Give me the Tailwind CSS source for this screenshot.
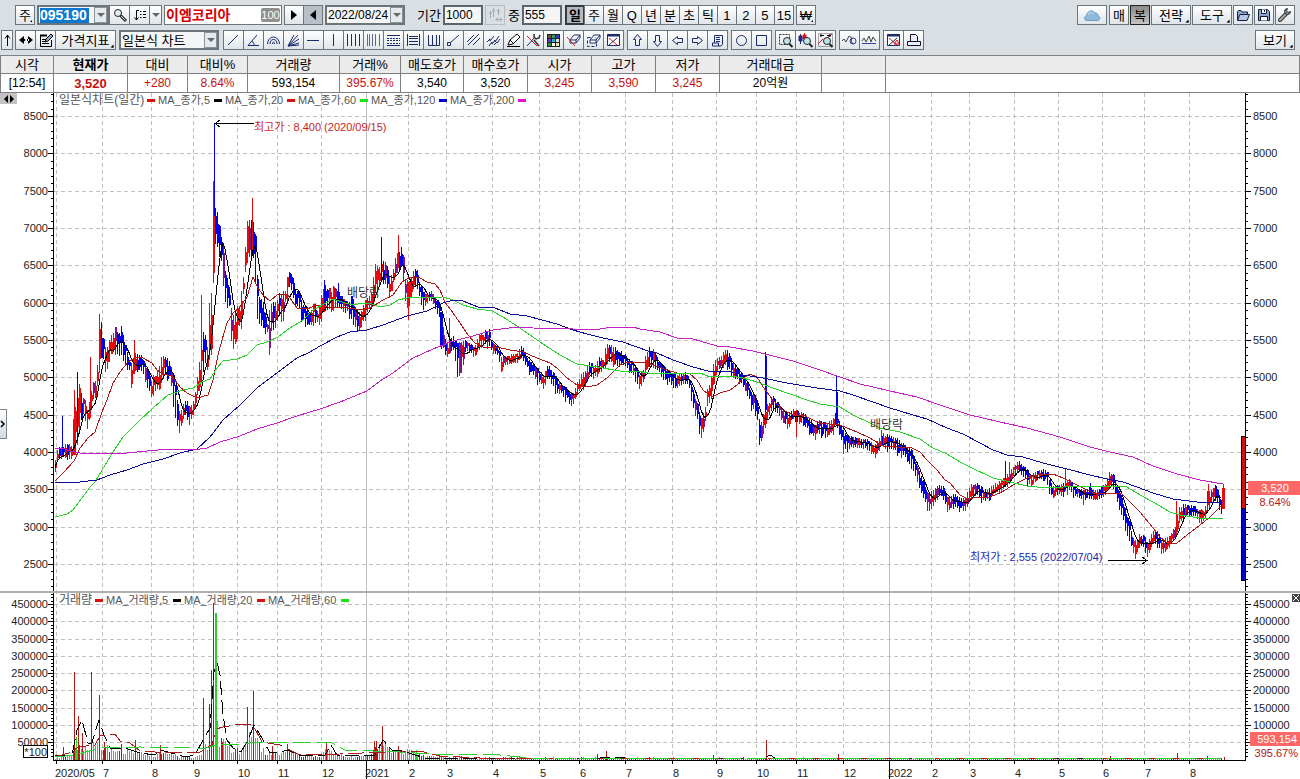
<!DOCTYPE html>
<html lang="ko">
<head>
  <meta charset="UTF-8" />
  <meta name="viewport" content="width=device-width, initial-scale=1.0" />
  <title>이엠코리아 차트</title>
  <script src="https://cdn.jsdelivr.net/npm/@tailwindcss/browser@4"></script>
</head>
<body class="bg-white text-black text-[13px] leading-none font-['Liberation_Sans','Noto_Sans_CJK_KR',sans-serif]">

  <header class="bg-[#d9dfe3] pt-[5px] pb-[5px] pr-[5px] overflow-hidden">
    <!-- 종목 / 주기 -->
    <div class="flex items-center h-5 pl-[15px] whitespace-nowrap">
      <button class="relative w-5 h-5 border border-[#6d757c] bg-linear-to-b from-white to-[#dfe5ea]">주<i class="absolute right-px bottom-px border-2 border-transparent border-r-black border-b-black scale-50"></i></button>
      <label class="flex items-center h-5 w-[72px] ml-[2px] border-2 border-[#6d757c] bg-[#f3f5f7]">
        <input aria-label="종목코드" value="095190" class="w-[49px] h-[15px] ml-px bg-[#0b78d0] text-white text-sm font-bold outline-none" />
        <span class="flex items-center justify-center w-[13px] h-4 ml-auto border border-[#8b9298] bg-[#e6eaee]"><svg width="8" height="4" fill="#666"><path d="M0 0h8L4 4z"/></svg></span>
      </label>
      <button aria-label="종목검색" class="w-[21px] h-5 border border-[#6d757c] bg-linear-to-b from-white to-[#dfe5ea]"><svg class="mx-auto" width="16" height="16" fill="none" stroke="#222"><circle cx="6" cy="6" r="3.5" fill="#dff0f5"/><path d="M8.500 8.500l5.500 5.500" stroke-width="3"/><path d="M9 9l4.500 4.500" stroke="#ddd"/></svg></button>
      <button aria-label="정렬" class="w-[21px] h-5 -ml-px border border-[#6d757c] bg-linear-to-b from-white to-[#dfe5ea]"><svg class="mx-auto" width="16" height="16" fill="none" stroke="#000"><path d="M7 3.500H4.500V13M2.500 10.500l2 2.500 2-2.500M8 4.500h1.500M11 4.500h3M8 7.500h1.500M11 7.500h3M8 10.500h1.500M11 10.500h3"/></svg></button>
      <button aria-label="정렬 더보기" class="w-[13px] h-5 -ml-px border border-[#6d757c] bg-linear-to-b from-white to-[#dfe5ea]"><svg class="mx-auto" width="8" height="4" fill="#666"><path d="M0 0h8L4 4z"/></svg></button>
      <label class="flex items-center h-5 w-[118px] ml-[2px] border border-[#6d757c] bg-white pr-px">
        <input aria-label="종목명" value="이엠코리아" class="min-w-0 flex-1 h-4 pl-px text-[#d80000] text-sm font-bold outline-none" />
        <span class="bg-[#8f8f8f] text-white text-[11px] leading-[14px] rounded-xs w-[19px] text-center">100</span>
      </label>
      <button aria-label="다음" class="w-5 h-5 ml-[2px] border border-[#6d757c] bg-linear-to-b from-white to-[#dfe5ea]"><svg class="mx-auto" width="8" height="10"><path d="M1 0l6 5-6 5z"/></svg></button>
      <button aria-label="이전" class="w-5 h-5 -ml-px border border-[#6d757c] bg-[#b9bfc6]"><svg class="mx-auto" width="8" height="10"><path d="M7 0L1 5l6 5z"/></svg></button>
      <label class="flex items-center h-5 w-[80px] ml-[2px] border-2 border-[#6d757c] bg-[#f3f5f7]">
        <input aria-label="기준일" value="2022/08/24" class="w-[62px] h-4 pl-px text-xs outline-none" />
        <span class="flex items-center justify-center w-[13px] h-4 ml-auto border border-[#8b9298] bg-[#e6eaee]"><svg width="8" height="4" fill="#666"><path d="M0 0h8L4 4z"/></svg></span>
      </label>
      <label for="period" class="ml-3">기간</label>
      <input id="period" value="1000" class="w-10 h-5 ml-[2px] pl-px border-2 border-[#5d656c] bg-[#f3f5f7] text-xs outline-none" />
      <button aria-label="봉 간격" class="w-5 h-5 ml-[2px] border border-[#b6bcc2]"><svg class="mx-auto" width="16" height="16" fill="none" stroke="#a3a9af"><path d="M3.500 4v7M6.500 1v9M11.500 2v6M2 6h3M5 4h3M10 4h3M9 12.500h6M11 10.500l-2 2 2 2M13 10.500l2 2-2 2"/></svg></button>
      <label for="count" class="ml-[3px]">중</label>
      <input id="count" value="555" class="w-10 h-5 ml-[2px] pl-px border-2 border-[#5d656c] bg-[#f3f5f7] text-xs outline-none" />
      <div id="units" class="flex ml-[3px]"></div>
      <button class="w-5 h-5 ml-[2px] border border-[#6d757c] bg-linear-to-b from-white to-[#dfe5ea] relative">₩<i class="absolute right-px bottom-px border-2 border-transparent border-r-black border-b-black scale-50"></i></button>

      <div class="flex gap-px ml-auto">
        <button aria-label="클라우드" class="w-[30px] h-5 mr-px border border-[#6d757c] bg-linear-to-b from-white to-[#dfe5ea]"><svg class="mx-auto" width="18" height="14"><path d="M4 12.500C1 12.500 .5 8.500 3.500 8 3.500 3.500 9 1 12 5c3 0 3 2 3 3 3 1 2 4.500-.5 4.500z" fill="#8db9dc" stroke="#6c9cc0"/><path d="M5 7c1-3 4-3 6-1" fill="none" stroke="#d6e9f6"/></svg></button>
        <button class="w-5 h-5 border border-[#6d757c] bg-linear-to-b from-white to-[#dfe5ea]">매</button>
        <button class="w-5 h-5 border border-[#222] bg-linear-to-b from-[#8a8a8a] to-[#c4c4c4]">복</button>
        <button class="w-10 h-5 border border-[#6d757c] bg-linear-to-b from-white to-[#dfe5ea] relative">전략<i class="absolute right-px bottom-px border-2 border-transparent border-r-black border-b-black scale-75"></i></button>
        <button class="w-10 h-5 border border-[#6d757c] bg-linear-to-b from-white to-[#dfe5ea] relative">도구<i class="absolute right-px bottom-px border-2 border-transparent border-r-black border-b-black scale-75"></i></button>
        <button aria-label="열기" class="w-5 h-5 border border-[#6d757c] bg-linear-to-b from-white to-[#dfe5ea]"><svg class="mx-auto" width="16" height="16" fill="#8fa6cf" stroke="#111c3d"><path d="M2.500 13V4.500l1-1H6l1 1.500h5.500V7"/><path d="M2.500 13.500l2.500-6h9.500l-2.500 6z" fill="#b7c7e3"/></svg></button>
        <button aria-label="저장" class="w-5 h-5 border border-[#6d757c] bg-linear-to-b from-white to-[#dfe5ea]"><svg class="mx-auto" width="16" height="16" fill="#8fa6cf" stroke="#111c3d"><path d="M2.500 2.500h9l2 2v9h-11z"/><path d="M5.500 2.500v4h5v-4M4.500 13.500V9.500h7v4" fill="#fff"/><path d="M8.500 3v2"/></svg></button>
        <button aria-label="설정" class="w-5 h-5 border border-[#6d757c] bg-linear-to-b from-white to-[#dfe5ea]"><svg class="mx-auto" width="16" height="16"><path d="M3 13l6-6" stroke="#333" stroke-width="4" stroke-linecap="round"/><path d="M3 13l6-6" stroke="#aaa" stroke-width="2" stroke-linecap="round"/><path d="M13.500 4.500a3 3 0 1 1-3-3L9.500 4l1.500 1.500z" fill="#888" stroke="#333"/></svg></button>
      </div>
    </div>

    <!-- 도형 도구 -->
    <div class="flex items-center h-5 mt-[5px] pl-px whitespace-nowrap">
      <button aria-label="위로" class="w-3 h-5 border border-[#6d757c] bg-linear-to-b from-white to-[#dfe5ea]"><svg width="10" height="14" fill="none" stroke="#000"><path d="M5.500 13V2M3 5.500L5.500 2 8 5.500"/></svg></button>
      <button aria-label="좌우 이동" class="w-[21px] h-5 ml-[2px] border border-[#6d757c] bg-linear-to-b from-white to-[#dfe5ea]"><svg class="mx-auto" width="14" height="8"><path d="M5 0v8L0 4zM9 0v8l5-4zM4 3h2v2H4zM8 3h2v2H8z"/></svg></button>
      <button aria-label="메모" class="w-[21px] h-5 -ml-px border border-[#6d757c] bg-linear-to-b from-white to-[#dfe5ea]"><svg class="mx-auto" width="16" height="16" fill="none" stroke="#000"><path d="M13.500 8v6.500h-11v-11H9"/><path d="M2 3.500h7" stroke-width="2"/><path d="M4 7.500h4M4 9.500h3M4 11.500h7"/><path d="M7 10l1-3 5-5 2 2-5 5z" fill="#8fa6cf"/></svg></button>
      <button class="w-[61px] h-5 -ml-px border border-[#6d757c] bg-linear-to-b from-white to-[#dfe5ea] relative">가격지표<i class="absolute right-px bottom-px border-2 border-transparent border-r-black border-b-black scale-75"></i></button>
      <div class="relative ml-[3px]">
        <select aria-label="차트 종류" class="block w-[100px] h-5 pl-px border-2 border-[#6d757c] bg-[#f3f5f7] appearance-none outline-none"><option>일본식 차트</option></select>
        <span class="absolute right-[2px] top-[2px] flex items-center justify-center w-[13px] h-4 border border-[#8b9298] bg-[#e6eaee] pointer-events-none"><svg width="8" height="4" fill="#666"><path d="M0 0h8L4 4z"/></svg></span>
      </div>
      <div id="tools" class="flex gap-[3px] ml-1"></div>
      <button class="w-10 h-5 ml-auto border border-[#6d757c] bg-linear-to-b from-white to-[#dfe5ea] relative">보기<i class="absolute right-px bottom-px border-2 border-transparent border-r-black border-b-black scale-75"></i></button>
    </div>
  </header>

  <!-- 시세 -->
  <table class="w-full table-fixed border-collapse text-center text-xs whitespace-nowrap">
    <colgroup>
      <col class="w-[53px]" /><col class="w-[74px]" /><col class="w-[60px]" /><col class="w-[60px]" /><col class="w-[92px]" /><col class="w-[61px]" /><col class="w-[63px]" /><col class="w-[64px]" /><col class="w-[64px]" /><col class="w-[64px]" /><col class="w-[64px]" /><col class="w-[102px]" /><col class="w-[64px]" /><col />
    </colgroup>
    <thead>
      <tr class="h-[18px] bg-[#ebebeb] text-[13px] [&>th]:font-normal [&>th]:p-0 [&>th]:border [&>th]:border-[#808080]">
        <th>시각</th><th><b>현재가</b></th><th>대비</th><th>대비%</th><th>거래량</th><th>거래%</th><th>매도호가</th><th>매수호가</th><th>시가</th><th>고가</th><th>저가</th><th>거래대금</th><th></th><th></th>
      </tr>
    </thead>
    <tbody>
      <tr class="h-[19px] [&>td]:p-0 [&>td]:border [&>td]:border-[#808080]">
        <td>[12:54]</td><td class="font-bold text-[13px] text-[#c80f0f]">3,520</td><td class="text-[#c80f0f]">+280</td><td class="text-[#c80f0f]">8.64%</td><td>593,154</td><td class="text-[#c80f0f]">395.67%</td><td>3,540</td><td>3,520</td><td class="text-[#c80f0f]">3,245</td><td class="text-[#c80f0f]">3,590</td><td class="text-[#c80f0f]">3,245</td><td>20억원</td><td></td><td></td>
      </tr>
    </tbody>
  </table>

  <main class="relative">
    <svg id="chart" class="block w-full h-auto" viewBox="0 93 1300 686" role="img" aria-label="일본식차트(일간)"></svg>
    <button aria-label="차트 이동" class="absolute left-0 top-0 w-[17px] h-[11px] bg-[#c3c3c3]"><svg class="mx-auto" width="12" height="8"><path d="M5 0v8L1 4zM7 0v8l4-4z"/></svg></button>
    <button aria-label="패널 열기" class="absolute left-0 top-[46%] w-[7px] h-[30px] border border-l-0 border-[#7d858c] bg-linear-to-b from-white to-[#d3d9df]"><svg width="6" height="8" fill="none" stroke="#000" stroke-width="1.500"><path d="M1 1l3 3-3 3"/></svg></button>
    <button aria-label="거래량 닫기" class="absolute right-0 top-[73%] w-2 h-2 bg-[#444]"><svg width="8" height="8" stroke="#fff"><path d="M1 1l6 6M7 1L1 7"/></svg></button>
  </main>

  <script>
    // 주기 버튼
    const units = document.getElementById("units");
    ["일", "주", "월", "Q", "년", "분", "초", "틱", "1", "2", "5", "15"].forEach((u, i) => {
      const b = document.createElement("button");
      b.className = i === 0
        ? "w-5 h-5 border-2 border-[#333a40] bg-[#b4b9c0] font-bold"
        : "w-5 h-5 -ml-px border border-[#6d757c] bg-linear-to-b from-white to-[#dfe5ea]";
      b.textContent = u;
      units.appendChild(b);
    });

    // 도형 버튼 (16x16)
    const lens = `<circle cx="10" cy="9" r="3.5" fill="#bfe3ea" stroke="#222"/><path d="M12.500 12l3 3" stroke="#222" stroke-width="2"/>`;
    const win = `<path d="M2.500 2.500h12v11h-12z" fill="#fff"/><path d="M2 3.500h13" stroke-width="2"/>`;
    const eraser = `<path d="M5 8l4-5h6l-4 5zM5 8v3h6l4-5V3M11 8v3" fill="#fff"/>`;
    const groups = [
      [
        ["추세선", `<path d="M3 13L13 3"/>`],
        ["각도선", `<path d="M14 13.500H3L12 3M7 9.500c2 1 2 2 2 4"/>`],
        ["원호", `<path d="M2.500 12a6 7 0 0 1 12 0M5 12a3.500 4.500 0 0 1 7 0M7.500 12a1 2 0 0 1 2 0"/>`],
        ["부채꼴", `<path d="M3 14L14 11M3 14L14 7M3 14L13 3M3 14L9 3M3 14L14 13"/>`],
        ["수평선", `<path d="M2 8.500h12"/>`],
        ["수직선", `<path d="M8.500 2v12"/>`],
        ["등간격선", `<path d="M2.500 2v12M6.500 2v12M10.500 2v12M14.500 2v12"/>`],
        ["피보나치 시간대", `<path d="M2.500 2v12M4.500 2v12M7.500 2v12M10.500 2v12M14.500 2v12" stroke="#5b6b96"/>`],
        ["되돌림", `<path d="M2 3.500h13M2 13.500h13"/><path d="M2 6.500h13M2 8.500h13M2 11.500h13" stroke-dasharray="2 1"/>`],
        ["가격대", `<path d="M2.500 2v12M14.500 2v12M4 4.500h9M4 6.500h9M4 9.500h9M4 12.500h9"/>`],
        ["사이클", `<path d="M3.500 3v10.500H7.500V3M7.500 10.500v3h4V3M11.500 13.500h3V3"/>`],
        ["선분", `<path d="M5 11l9-8M2.500 10.500h3v3h-3z"/>`],
        ["평행선", `<path d="M2 10l7-7M3 13L14 2M8 13l7-7"/>`],
        ["채널", `<path d="M2 10l3-3v2l4-5M4 14l3-4v2l3-4v2l4-6M9 13l3-3v1l3-4"/>`],
        ["연필", `<path d="M3 13l2-5 7-6 3 3-7 7zM5 8l3 3" stroke="#000" fill="#fff"/><path d="M2 14.500h13" stroke="#000"/>`],
        ["지표 설정", `<path d="M2 4l10 10" stroke="#d11"/><path d="M2 14L10 5"/><path d="M9 8l5 6M9 2v3l2 2 3-1 1-3" stroke="#333" stroke-width="1.500"/>`],
        ["색상", `<g stroke="none"><path d="M2 2h13v13H2z" fill="#222"/><path d="M3 3h3v3H3z" fill="#714c3a"/><path d="M7 3h3v3H7z" fill="#2d9b62"/><path d="M11 3h3v3h-3z" fill="#3340b5"/><path d="M3 7h3v3H3z" fill="#5a3fc1"/><path d="M7 7h3v3H7z" fill="#28b7c5"/><path d="M11 7h3v3h-3z" fill="#dddddd"/><path d="M3 11h3v3H3z" fill="#3c8f40"/><path d="M7 11h3v3H7z" fill="#fff"/><path d="M11 11h3v3h-3z" fill="#ebe6ac"/></g>`],
        ["지우기", `${eraser}<path d="M2 5l8 9" stroke="#d11"/>`],
        ["선택 지우기", `<path d="M2.500 5.500h9v9h-9z" stroke-dasharray="3 2"/>${eraser}`],
        ["전체 지우기", `${win}<path d="M4 6l8 7" stroke="#d11"/><path d="M4 13l8-7"/>`]
      ],
      [
        ["위 화살표", `<path d="M8.500 2.500l4 5h-2v6h-4v-6h-2z"/>`],
        ["아래 화살표", `<path d="M8.500 14.500l4-5h-2v-6h-4v6h-2z"/>`],
        ["왼쪽 화살표", `<path d="M3.500 8.500l5-4v2h5v4h-5v2z"/>`],
        ["오른쪽 화살표", `<path d="M13.500 8.500l-5-4v2h-5v4h5v2z"/>`],
        ["문자", `<path d="M5.500 11V3.500h8v9l-1.500 1.500H3.500v-3h6v3M7 5.500h4M7 7.500h4M7 9.500h4"/>`]
      ],
      [
        ["원", `<circle cx="8.500" cy="8.500" r="5"/>`],
        ["사각형", `<path d="M3.500 3.500h10v10h-10z"/>`]
      ],
      [
        ["영역 확대", `<path d="M2.500 2.500h10v10h-10z" stroke="#333" stroke-dasharray="2 1"/>${lens}`],
        ["봉 확대", `<path d="M3.500 2v10" /><path d="M2 4h3v5H2z" fill="#22b"/><path d="M7.500 1v8M6 3h3v4H6z" stroke="#d11" fill="#d11"/>${lens}`],
        ["전체 보기", `<path d="M1.500 1.500h14v13h-14z" stroke="#555" stroke-dasharray="1 1"/><path d="M1 12l5-5M10 6l5-4" stroke="#d11"/><path d="M3 3.500h4M10 3.500h4M4 2v3M13 2v3" stroke="#000"/>${lens}`]
      ],
      [
        ["파형 검색", `<path d="M1 9l2-2 2 3 3-6 3 2-1 4 3 2" stroke="#444"/><circle cx="12" cy="9" r="3" stroke="#3b3ba0"/>`],
        ["파형", `<path d="M1 9l2-3 2 4 3-6 2 6 2-5 3 4" stroke="#444"/><path d="M1 11.500h14" stroke="#3b3ba0"/>`]
      ],
      [
        ["차트 창", `${win}<path d="M4 6l8 7M9 12l3-4 2 4z" stroke="#d11"/><path d="M4 13l8-7"/>`],
        ["인쇄", `<path d="M5.500 9V2.500h5l2 2V9M2.500 9.500h13v4h-13z" fill="#eef" stroke="#112"/>`]
      ]
    ];
    const tools = document.getElementById("tools");
    groups.forEach((g) => {
      const box = document.createElement("div");
      box.className = "flex";
      g.forEach(([name, d], i) => {
        const b = document.createElement("button");
        b.setAttribute("aria-label", name);
        b.className = i === 0
          ? "w-[21px] h-5 border border-[#6d757c] bg-linear-to-b from-white to-[#dfe5ea]"
          : "w-[21px] h-5 -ml-px border border-[#6d757c] bg-linear-to-b from-white to-[#dfe5ea]";
        b.innerHTML = `<svg class="mx-auto" width="17" height="17" fill="none" stroke="#1b2a6b">${d}</svg>`;
        box.appendChild(b);
      });
      tools.appendChild(box);
    });

    // ---------- 차트 ----------
    const L = 53, R = 1245, BASE = 760;
    const RED = "#e60a0a", BLUE = "#0000e6", DRED = "#b01818", GREEN = "#28d228";
    const out = [];
    const line = (x1, y1, x2, y2, c, extra = "") => out.push(`<path d="M${x1} ${y1}L${x2} ${y2}" stroke="${c}" ${extra}/>`);
    const rect = (x, y, w, h, c) => out.push(`<rect x="${x}" y="${y}" width="${w}" height="${h}" fill="${c}"/>`);
    const text = (x, y, s, c = "#222", size = 11, anchor = "start") =>
      out.push(`<text x="${x}" y="${y}" fill="${c}" font-size="${size}" text-anchor="${anchor}">${s}</text>`);
    const nums = (s) => s.trim().split(/\s+/).map((p) => p.split(",").map(Number));
    const priceY = (p) => Math.round(116 + (8500 - p) * 448 / 6000) + 0.5;
    const volY = (v) => Math.round(604 + (450000 - v) * 138 / 400000) + 0.5;

    let seed = 7;
    const rnd = () => (seed = (seed * 16807) % 2147483647) / 2147483647;

    function at(pts, x) {
      let i = 1;
      while (i < pts.length - 1 && pts[i][0] < x) i++;
      const a = pts[i - 1], b = pts[i];
      const t = Math.min(1, Math.max(0, (x - a[0]) / (b[0] - a[0])));
      return a.slice(1).map((v, k) => v + (b[k + 1] - v) * t);
    }

    // 격자
    const months = [[56, "2020/05"], [102, "7"], [151, "8"], [193, "9"], [237, "10"], [277, "11"], [321, "12"], [366, "2021"], [408, "2"], [446, "3"], [492, "4"], [539, "5"], [579, "6"], [625, "7"], [672, "8"], [716, "9"], [756, "10"], [796, "11"], [843, "12"], [889, "2022"], [931, "2"], [969, "3"], [1014, "4"], [1058, "5"], [1102, "6"], [1144, "7"], [1189, "8"]];
    const dash = `stroke-dasharray="4 3"`;
    for (let p = 2500; p <= 8500; p += 500) line(L + 1, priceY(p), R, priceY(p), "#c0c0c0", dash);
    for (let v = 50000; v <= 450000; v += 50000) line(L + 1, volY(v), R, volY(v), "#c0c0c0", dash);
    months.forEach(([x, m]) => {
      const year = m.length === 4;
      line(x + 0.5, 93, x + 0.5, BASE, "#c0c0c0", year ? "" : dash);
      line(x + 0.5, BASE, x + 0.5, year ? 779 : 764, "#000");
      text(m.length > 2 ? x - 1 : x + 1, 777, m);
    });

    // 봉: x, 고가, 저가
    const env = nums(`
      55,462,473 57,450,462 60,447,457 66,445,458 72,447,458 74,390,455 76,415,455 78,372,440 80,398,430 82,390,413 84,400,420 87,407,428
      90,395,418 93,380,400 96,383,397 99,314,373 102,331,355 105,345,377 108,345,367 111,335,350 115,329,350 118,328,355 121,326,360
      125,345,365 129,360,371 131,362,390 134,355,369 137,352,370 142,357,373 145,360,380 148,374,390 151,378,398 156,375,390 160,358,391
      164,358,375 170,362,376 173,372,410 177,395,427 180,415,432 183,405,418 186,397,416 189,405,427 192,405,418 195,392,408 199,360,390
      202,335,380 204,323,360 207,345,372 209,303,368 211,277,350 213,215,283 216,197,240 218,217,257 220,228,257 223,243,287 226,277,308
      229,285,310 232,318,357 235,308,345 238,307,328 241,292,330 244,263,283 247,215,262 250,217,253 252,220,253 255,232,293 258,290,330
      261,298,328 264,303,338 267,325,331 269,310,350 272,297,330 276,303,325 279,293,318 282,293,330 285,293,302 287,277,303 289,272,290
      292,274,293 295,288,303 298,290,306 302,303,320 306,308,322 310,313,327 314,303,322 318,313,323 321,296,320 324,285,310 328,290,312
      333,288,310 338,288,308 342,300,310 347,302,312 352,295,325 356,307,325 360,312,332 364,303,320 368,297,310 372,290,308 374,262,297
      378,265,290 381,262,282 384,260,282 386,260,287 389,277,298 393,268,282 396,253,275 399,250,268 402,247,270 405,278,300 408,280,312
      411,278,298 415,267,285 417,268,290 420,285,303 424,295,305 430,292,300 435,297,307 439,305,316 441,310,348 444,333,350 446,347,362
      449,335,352 453,338,352 458,343,377 461,342,373 465,342,352 470,345,351 474,348,358 478,335,350 482,335,347 486,330,343 489,331,347
      492,343,352 497,347,354 501,358,367 506,357,364 512,355,362 517,354,361 521,346,358 524,350,361 527,358,367 532,363,374 536,368,379
      540,372,381 543,376,388 547,365,380 551,370,380 555,376,392 559,383,392 564,387,396 570,392,400 573,394,402 577,384,396 580,376,388
      585,370,385 589,361,376 594,368,378 598,358,372 603,360,370 606,344,363 611,343,362 615,347,362 619,352,362 625,356,364 630,360,370
      635,366,378 639,375,390 643,370,383 645,355,376 649,348,366 653,350,370 657,357,369 662,365,378 668,371,380 672,374,386 677,376,388
      681,373,384 686,374,381 690,380,391 694,396,414 698,405,423 701,418,442 704,413,427 707,390,407 710,378,407 713,364,387 716,358,371
      720,358,367 724,352,363 729,350,370 732,361,378 736,366,379 740,370,381 744,378,391 748,386,398 753,393,409 757,400,420 759,417,440
      762,423,443 764,405,425 769,402,414 773,397,409 778,404,413 783,411,422 787,414,424 792,411,419 797,412,421 803,414,425 808,419,429
      814,425,439 818,421,432 823,422,433 828,424,438 833,420,429 835,412,424 840,424,436 844,431,450 849,436,446 856,438,446 862,440,447
      868,441,449 873,446,454 878,441,451 881,433,447 886,434,451 890,437,447 895,438,449 900,443,453 906,447,458 911,450,467 915,460,478
      920,474,490 926,488,506 928,498,512 933,489,505 937,486,496 940,485,494 943,487,499 947,496,510 952,496,506 957,496,506 963,500,510
      967,493,508 970,483,500 976,484,493 981,488,500 986,491,499 991,486,496 997,484,491 1002,480,490 1005,476,487 1010,470,483
      1014,466,473 1018,462,472 1022,467,476 1027,470,480 1031,475,487 1036,471,479 1042,471,478 1046,470,478 1049,478,494 1053,487,497
      1058,485,493 1064,484,491 1068,478,489 1073,486,493 1079,490,497 1084,492,500 1090,488,497 1094,491,499 1099,489,498 1105,485,493
      1109,474,490 1112,473,484 1116,484,498 1120,494,511 1124,506,523 1127,515,540 1131,530,544 1134,543,557 1138,537,548 1143,534,545
      1147,543,559 1151,534,546 1154,531,541 1158,533,543 1161,541,554 1166,539,549 1170,534,545 1175,526,538 1178,508,528 1180,508,520
      1184,502,517 1189,506,516 1194,507,516 1199,511,519 1204,512,521 1207,490,515 1211,488,503 1216,485,498 1220,500,511 1222,503,512`);
    const candles = [];
    for (let x = 55; x <= 1221; x += 2) {
      let [t, b] = at(env, x);
      const c0 = (t + b) / 2, [nt, nb] = at(env, x + 3), trend = c0 - (nt + nb) / 2;
      const h = b - t;
      t += rnd() * h * 0.25 - 2;
      b -= rnd() * h * 0.25 - 2;
      if (rnd() < 0.12) b += 4;
      const up = trend + (rnd() - 0.5) * 6 > 0;
      const color = rnd() < 0.1 ? "#80108c" : up ? RED : BLUE;
      candles.push([x, c0]);
      rect(x, Math.round(t), 1, Math.max(2, Math.round(b - t)), color);
      const bt = t + (b - t) * rnd() * 0.4, bh = (b - t) * (0.3 + rnd() * 0.35);
      rect(x, Math.round(bt), 2, Math.max(2, Math.round(bh)), color);
    }
    // 긴 꼬리
    [[62, 416, 455, 0], [77, 372, 440, 0], [74, 390, 455, 1], [90, 357, 418, 1], [99, 314, 373, 1], [134, 340, 368, 1], [101, 322, 350, 0], [201, 295, 380, 1], [213, 181, 283, 1], [214, 123, 227, 0], [252, 198, 253, 1], [269, 310, 355, 1], [324, 280, 305, 0], [338, 283, 300, 0], [381, 237, 280, 0], [398, 235, 268, 1], [408, 290, 320, 1], [457, 350, 377, 0], [449, 318, 350, 1], [765, 352, 412, 0], [796, 410, 437, 1], [836, 375, 425, 0], [843, 440, 454, 1], [881, 430, 445, 1], [1005, 461, 487, 0], [1009, 462, 483, 1], [1065, 469, 490, 1], [1083, 493, 505, 1], [1090, 483, 493, 0], [1176, 501, 535, 1], [1208, 484, 505, 1], [1221, 500, 514, 0]].forEach(([x, t, b, up]) => {
      rect(x, t, 1, b - t, up ? RED : BLUE);
    });
    rect(73, 420, 3, 35, RED);
    rect(213, 216, 2, 45, RED);
    rect(440, 312, 3, 34, BLUE);
    rect(460, 343, 2, 30, "#80108c");
    rect(765, 356, 2, 54, BLUE);
    rect(836, 392, 2, 30, BLUE);
    rect(1223, 484, 1, 25, RED);
    rect(1222, 488, 3, 21, RED);

    // 이동평균선
    const poly = (pts, c, extra = "") => out.push(`<polyline points="${pts.map((p) => p.join(",")).join(" ")}" fill="none" stroke="${c}" ${extra}/>`);
    poly(candles.map(([x], i) => {
      const w = candles.slice(Math.max(0, i - 5), i + 1);
      return [x, (w.reduce((s, c) => s + c[1], 0) / w.length).toFixed(1)];
    }), "#000");
    poly(nums(`55,481 63,473 74,461 80,448 88,438 95,432 102,412 107,400 113,383 120,372 128,362 137,357 143,358 152,363 157,370 163,374 172,376 180,387 187,393 197,398 208,395 213,380 218,355 222,340 227,323 233,313 240,307 247,297 253,277 258,288 263,295 270,301 277,295 287,294 297,308 307,309 317,305 328,307 347,308 363,310 370,308 383,300 393,295 402,282 410,277 420,278 427,282 435,284 440,290 445,302 453,313 460,323 468,335 475,343 483,347 497,347 510,350 523,352 537,358 550,363 557,368 567,378 577,385 587,387 597,385 607,378 620,365 628,362 648,363 653,365 667,370 677,373 690,374 697,380 703,390 712,397 720,393 730,390 737,385 743,378 750,374 757,377 763,387 773,400 783,410 793,415 803,415 813,420 820,423 840,425 847,428 857,432 870,438 883,446 897,447 910,447 920,452 927,460 937,470 945,480 950,483 960,495 968,499 978,497 990,497 1002,492 1013,485 1027,478 1040,474 1053,474 1063,478 1073,483 1083,488 1097,494 1113,493 1122,494 1130,502 1140,512 1153,528 1160,537 1167,543 1177,543 1187,535 1200,525 1210,517 1220,507 1223,506`), DRED);
    poly(nums(`55,517 67,514 73,510 82,498 90,487 95,482 102,470 113,452 123,437 140,420 153,408 168,395 183,390 193,388 202,382 210,379 217,368 223,361 237,359 247,355 257,345 267,342 278,337 290,328 303,320 313,310 328,302 333,299 345,303 353,305 363,303 372,304 380,307 390,305 398,300 407,298 443,297 453,300 463,305 477,309 492,311 503,317 517,326 530,335 543,344 560,355 577,364 597,367 620,371 637,371 648,373 700,373 710,377 730,376 743,378 757,382 773,388 790,394 807,400 820,404 840,407 853,415 870,423 880,428 900,432 920,439 933,448 947,454 960,462 970,467 993,478 1010,482 1027,486 1047,488 1063,487 1113,486 1127,487 1140,495 1153,502 1170,512 1180,515 1200,518 1223,518`), GREEN);
    poly(nums(`55,482 80,482 97,480 110,475 127,470 143,464 163,459 180,453 197,449 210,437 223,420 240,405 257,388 277,373 297,358 310,352 320,346 337,337 350,332 367,330 383,325 407,316 427,311 443,303 453,300 463,301 478,307 495,308 510,314 527,316 542,320 557,324 573,330 587,334 603,338 623,342 648,351 657,353 673,360 693,367 708,371 727,371 743,375 763,378 787,383 817,388 840,391 853,395 873,402 890,408 913,415 927,419 947,428 963,434 980,443 993,450 1007,455 1023,457 1043,463 1067,469 1090,475 1107,479 1123,482 1137,487 1153,493 1173,499 1197,502 1223,503`), "#0a0a9a");
    poly(nums(`55,448 62,448 70,451 80,453 127,453 147,451 170,449 193,450 207,448 220,442 240,436 257,429 277,423 297,416 320,409 340,402 367,391 380,381 393,373 413,358 433,349 453,341 473,336 493,330 517,327 533,328 573,329 600,329 613,327 633,327 640,329 660,332 677,338 693,339 717,346 730,347 753,351 773,356 793,361 817,369 840,377 860,384 890,391 917,397 940,405 970,415 1000,422 1027,428 1060,437 1090,447 1110,452 1133,457 1153,466 1177,474 1200,480 1223,484`), "#c41ec4");

    // 거래량: x, 상한 높이
    const vol = nums(`55,3 66,6 74,14 80,18 90,16 100,20 110,14 120,16 130,10 145,8 155,7 165,9 175,6 190,3 200,6 208,20 215,30 222,24 230,16 240,12 248,22 256,26 265,10 280,10 288,12 300,5 320,4 326,20 335,8 350,4 366,5 374,16 382,22 392,14 405,12 415,10 425,5 445,4 480,3 1222,2`);
    for (let x = 55; x < 1223; x += 2) {
      const h = Math.round(at(vol, x)[0] * (0.45 + rnd() * 0.55));
      if (h > 0) rect(x, BASE - h, 1, h, rnd() < 0.35 ? DRED : GREEN);
    }
    // 거래 급증일
    [[63, 747, 1], [74, 672, 1], [76, 737, 0], [78, 716, 1], [82, 733, 1], [91, 672, 1], [93, 742, 0], [99, 695, 1], [104, 742, 1], [121, 744, 1], [135, 740, 1], [160, 745, 1], [203, 698, 1], [205, 744, 0], [209, 704, 1], [211, 670, 1], [213, 603, 1], [217, 721, 0], [222, 742, 1], [247, 707, 1], [249, 732, 0], [253, 691, 1], [255, 738, 0], [272, 746, 1], [287, 744, 1], [326, 742, 1], [374, 741, 1], [376, 741, 1], [382, 726, 1], [398, 746, 1], [416, 750, 0], [606, 751, 1], [597, 754, 1], [766, 740, 1], [713, 755, 1], [838, 754, 1], [1110, 756, 1], [1177, 753, 1], [1207, 756, 1], [1224, 757, 1]].forEach(([x, y, up]) => {
      rect(x, y, 1, BASE - y, up ? DRED : GREEN);
    });
    poly(nums(`55,756 72,755 77,730 82,720 88,743 92,743 95,732 99,720 104,735 110,748 125,748 140,753 155,755 160,750 168,752 185,757 195,755 203,740 210,728 214,672 217,662 220,675 223,715 227,740 233,748 241,752 248,740 254,725 262,738 270,753 280,752 288,750 300,756 325,755 331,745 337,755 375,755 383,740 392,750 403,751 412,754 425,758 600,758 612,757 625,758 765,758 770,755 775,758 1222,758`), "#000", `stroke-dasharray="14 5"`);
    poly(nums(`55,757 72,752 78,747 95,745 100,736 115,734 120,741 130,743 140,751 170,753 200,752 212,745 216,729 223,727 240,724 253,725 262,742 280,745 290,750 300,755 340,754 385,752 403,751 420,751 440,756 480,758 1222,758`), DRED, `stroke-dasharray="16 5"`);
    poly(nums(`55,757 75,755 90,751 102,748 140,747 190,748 205,748 220,744 245,744 255,742 330,742 345,750 400,752 430,754 500,755 530,758 1222,758`), GREEN, `stroke-dasharray="18 6"`);
    rect(215, 613, 2, BASE - 613, GREEN);

    // 축
    line(L + 0.5, 93, L + 0.5, BASE, "#000");
    line(R + 0.5, 93, R + 0.5, BASE, "#000");
    line(L, BASE + 0.5, R + 1, BASE + 0.5, "#000");
    for (let p = 2200; p <= 8800; p += 100) {
      const y = priceY(p), w = p % 500 ? 2 : 5;
      line(L - w, y, L, y, "#000");
      line(R + 1, y, R + 1 + w, y, "#000");
      if (p % 500 === 0) {
        text(L - 5, y + 3, p, "#222", 11, "end");
        if (p !== 3500) text(R + 8, y + 3, p);
      }
    }
    for (let v = 10000; v <= 480000; v += 10000) {
      const y = volY(v), w = v % 50000 ? 2 : 5;
      line(L - w, y, L, y, "#000");
      line(R + 1, y, R + 1 + w, y, "#000");
      if (v % 50000 === 0) {
        text(L - 5, y + 3, v, "#222", 11, "end");
        if (v > 50000) text(R + 8, y + 3, v);
      }
    }
    rect(0, 591, 1300, 2, "#b0b0b0");
    out.push(`<rect x="23.5" y="745.5" width="24" height="12" fill="#fff" stroke="#000"/>`);
    text(47, 756, "*100", "#222", 11, "end");

    // 범례
    const legend = (y, items) => items.forEach(([x, s, c, size]) => {
      text(x, y, s, "#555", size || 11);
      if (c) rect(c[0], y - 5, 8, 3, c[1]);
    });
    legend(104, [[59, "일본식차트(일간)", [147, "#d81010"], 12], [158, "MA_종가,5", [214, "#000"]], [225, "MA_종가,20", [287, "#d81010"]], [298, "MA_종가,60", [360, "#14e614"]], [371, "MA_종가,120", [439, "#0000d0"]], [450, "MA_종가,200", [518, "#e014d2"]]]);
    legend(604, [[59, "거래량", [95, "#d81010"], 12], [106, "MA_거래량,5", [173, "#000"]], [184, "MA_거래량,20", [257, "#d81010"]], [268, "MA_거래량,60", [341, "#14e614"]]]);

    // 최고 / 최저
    line(215, 123.5, 254, 123.5, "#000");
    out.push(`<path d="M220 120l-5 3.500 5 3.500M1142 557l5 3.500-5 3.500" fill="none" stroke="#000"/>`);
    text(254, 131, "최고가 : 8,400 (2020/09/15)", "#c81e1e");
    line(1108, 560.5, 1147, 560.5, "#000");
    text(970, 561, "최저가 : 2,555 (2022/07/04)", "#1e1eb4");
    text(347, 297, "배당락", "#333", 12);
    text(870, 429, "배당락", "#333", 12);

    // 현재가 표시
    out.push(`<rect x="1241.5" y="436.5" width="4" height="72" fill="#d81010" stroke="#000"/><rect x="1241.5" y="508.5" width="4" height="72" fill="#0000d0" stroke="#000"/>`);
    rect(1248, 481, 52, 14, "#ff6767");
    text(1275, 492, "3,520", "#fff", 11, "middle");
    text(1275, 506, "8.64%", "#b41414", 11, "middle");
    rect(1250, 732, 50, 14, "#ff6767");
    text(1297, 743, "593,154", "#fff", 11, "end");
    text(1298, 757, "395.67%", "#b41414", 11, "end");

    document.getElementById("chart").innerHTML = `<g shape-rendering="crispEdges">${out.join("")}</g>`;
  </script>
</body>
</html>
